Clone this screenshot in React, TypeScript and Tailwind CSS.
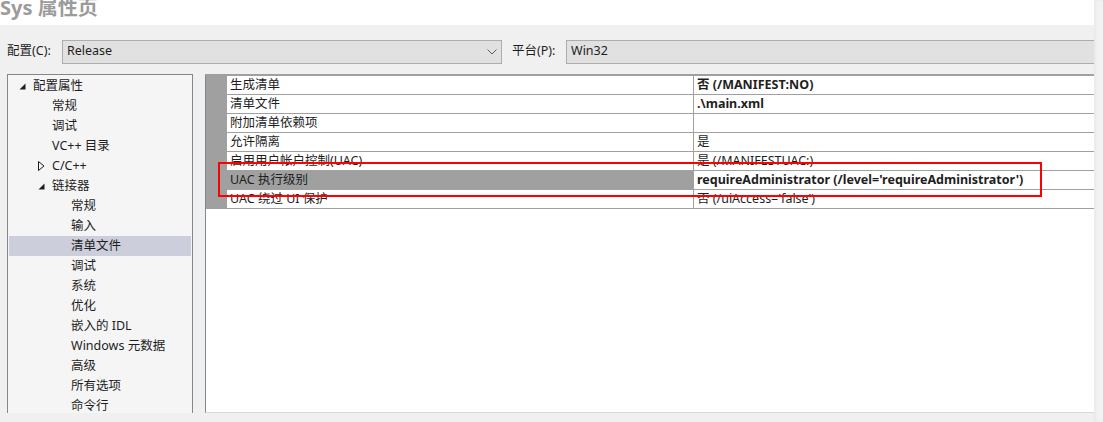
import React from 'react';

const font = { fontFamily: '"Noto Sans", "Noto Sans CJK SC", sans-serif' };

type TreeItem = { label: string; level: number; arrow?: 'open' | 'closed'; selected?: boolean };

const tree: TreeItem[] = [
  { label: '配置属性', level: 0, arrow: 'open' },
  { label: '常规', level: 1 },
  { label: '调试', level: 1 },
  { label: 'VC++ 目录', level: 1 },
  { label: 'C/C++', level: 1, arrow: 'closed' },
  { label: '链接器', level: 1, arrow: 'open' },
  { label: '常规', level: 2 },
  { label: '输入', level: 2 },
  { label: '清单文件', level: 2, selected: true },
  { label: '调试', level: 2 },
  { label: '系统', level: 2 },
  { label: '优化', level: 2 },
  { label: '嵌入的 IDL', level: 2 },
  { label: 'Windows 元数据', level: 2 },
  { label: '高级', level: 2 },
  { label: '所有选项', level: 2 },
  { label: '命令行', level: 2 },
];

type Prop = { name: string; value: string; bold?: boolean; selected?: boolean };

const props: Prop[] = [
  { name: '生成清单', value: '否 (/MANIFEST:NO)', bold: true },
  { name: '清单文件', value: '.\\main.xml', bold: true },
  { name: '附加清单依赖项', value: '' },
  { name: '允许隔离', value: '是' },
  { name: '启用用户帐户控制(UAC)', value: '是 (/MANIFESTUAC:)' },
  { name: 'UAC 执行级别', value: "requireAdministrator (/level='requireAdministrator')", bold: true, selected: true },
  { name: 'UAC 绕过 UI 保护', value: "否 (/uiAccess='false')" },
];

const pad = ['pl-[24px]', 'pl-[43px]', 'pl-[62px]'];
const arrowPad = ['w-[24px] pl-[10px]', 'w-[43px] pl-[29px]', 'w-[62px] pl-[48px]'];

function Arrow({ kind }: { kind: 'open' | 'closed' }) {
  if (kind === 'open')
    return (
      <svg width="7" height="7" viewBox="0 0 7 7">
        <path d="M6.5 0.5 L6.5 6.5 L0.5 6.5 Z" fill="#1e1e1e" />
      </svg>
    );
  return (
    <svg width="7" height="10" viewBox="0 0 7 10">
      <path d="M0.5 0.5 L6 5 L0.5 9.5 Z" fill="none" stroke="#1e1e1e" strokeWidth="1" />
    </svg>
  );
}

export default function App() {
  return (
    <div className="relative flex w-[1103px] h-[422px] overflow-hidden bg-[#f0f0f0] text-[12.5px] text-[#1e1e1e]" style={font}>
      <div className="flex flex-col w-[1094px] shrink-0">
        {/* title */}
        <div className="h-[25px] bg-white overflow-hidden">
          <div className="-mt-[3px] text-[20px] leading-[22px] font-bold text-[#9b9b9b]">Sys 属性页</div>
        </div>

        {/* config row */}
        <div className="flex items-center h-[24px] mt-[14px] pt-[1px]">
          <span className="w-[62px] pl-[7px]">配置(C):</span>
          <div className="flex items-center justify-between w-[440px] h-[24px] bg-[#e1e1e1] border border-[#adadad] pl-[4px] pr-[4px]">
            <span>Release</span>
            <svg width="10" height="6" viewBox="0 0 10 6">
              <path d="M0.5 0.5 L5 5 L9.5 0.5" fill="none" stroke="#5f5f5f" strokeWidth="1" />
            </svg>
          </div>
          <span className="w-[64px] pl-[10px]">平台(P):</span>
          <div className="flex items-center flex-1 h-[24px] bg-[#e1e1e1] border-y border-l border-[#adadad] pl-[4px]">
            <span>Win32</span>
          </div>
        </div>

        {/* body */}
        <div className="flex mt-[11px] h-[339px]">
          <div className="ml-[7px] w-[186px] h-full bg-[#f5f5f5] border-x border-t border-[#828790] p-[1px] overflow-hidden">
            {tree.map((t, i) => (
              <div key={i} className={`flex items-center h-[20px] ${t.selected ? 'bg-[#cccedb]' : ''}`}>
                {t.arrow ? (
                  <span className={`flex items-center shrink-0 ${arrowPad[t.level]}`}>
                    <Arrow kind={t.arrow} />
                  </span>
                ) : (
                  <span className={`shrink-0 ${pad[t.level]}`} />
                )}
                <span className="whitespace-nowrap">{t.label}</span>
              </div>
            ))}
          </div>

          <div className="ml-[12px] flex-1 h-full bg-white border-l border-[#828790] border-t-2 border-t-[#a0a0a0] border-b border-b-[#dadada]">
            {props.map((p, i) => (
              <div key={i} className="flex h-[19px]">
                <div className="w-[21px] bg-[#a0a0a0]" />
                <div
                  className={`flex items-center w-[467px] pl-[3px] border-r border-b border-[#a0a0a0] ${p.selected ? 'bg-[#a0a0a0]' : ''}`}
                >
                  <span className="whitespace-nowrap">{p.name}</span>
                </div>
                <div className="flex items-center flex-1 pl-[3px] border-b border-[#a0a0a0]">
                  <span className={`whitespace-nowrap ${p.bold ? 'font-bold' : ''}`}>{p.value}</span>
                </div>
              </div>
            ))}
          </div>
        </div>
      </div>
      <div className="flex-1 bg-[#f2f2f2] shadow-[inset_2px_0_3px_rgba(0,0,0,0.04)]" />

      {/* red highlight */}
      <div className="absolute left-[218px] top-[162px] w-[824px] h-[35px] border-2 border-[#ff0000]" />
    </div>
  );
}
